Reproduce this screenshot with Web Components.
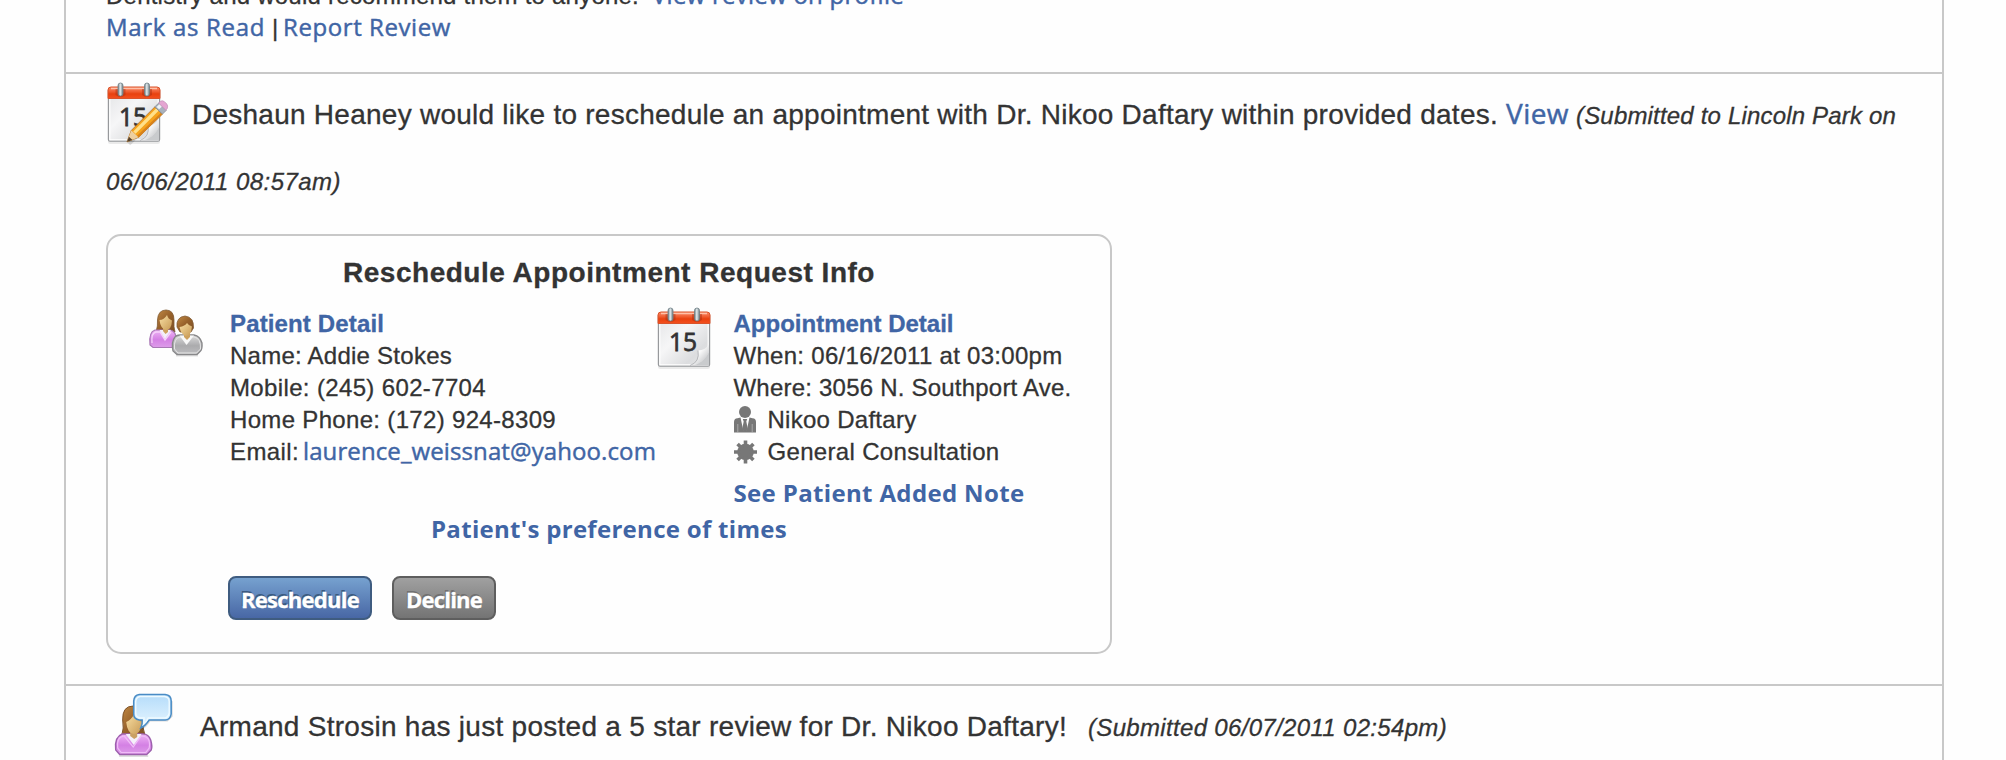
<!DOCTYPE html>
<html lang="en">
<head>
<meta charset="utf-8">
<title>Appointment activity</title>
<style>
html,body{margin:0;height:100%;background:#fefefe;overflow:hidden}
body{font-family:"Liberation Sans",Arial,sans-serif;color:#333}
</style>
</head>
<body>
<activity-feed>
  <feed-item class="first">
    <line-row><text-run w="533">Dentistry and would recommend them to anyone.</text-run><text-run kind="link" w="252" gap="13">View review on profile</text-run></line-row>
    <line-row><text-run kind="link" w="159">Mark as Read</text-run><text-run w="6" gap="7">|</text-run><text-run kind="link" w="168" gap="5">Report Review</text-run></line-row>
  </feed-item>
  <feed-item class="request">
    <line-row class="head"><calendar-icon edit></calendar-icon><text-run size="28" w="1306" gap="22" lead="68">Deshaun Heaney would like to reschedule an appointment with Dr. Nikoo Daftary within provided dates.</text-run><text-run kind="link" size="28" w="63" gap="8">View</text-run><text-run kind="note" w="320" gap="7">(Submitted to Lincoln Park on</text-run></line-row>
    <line-row class="head second"><text-run kind="note" w="235" lead="66">06/06/2011 08:57am)</text-run></line-row>
    <request-card></request-card>
  </feed-item>
  <feed-item class="review">
    <line-row class="head"><reviewer-icon></reviewer-icon><text-run size="28" w="867" gap="22" lead="68">Armand Strosin has just posted a 5 star review for Dr. Nikoo Daftary!</text-run><text-run kind="note" w="359" gap="21">(Submitted 06/07/2011 02:54pm)</text-run></line-row>
  </feed-item>
</activity-feed>
<script>
function define(name, html, setup) {
  customElements.define(name, class extends HTMLElement {
    connectedCallback() {
      if (this.shadowRoot) return;
      this.attachShadow({mode: 'open'}).innerHTML = html;
      if (setup) setup(this, this.shadowRoot);
    }
  });
}

// A single-line run of text, tracked to an exact advance width.
define('text-run', `<style>
  :host{display:block;flex:none;white-space:pre;font-size:24px;line-height:32px;-webkit-text-stroke:.3px currentColor}
  :host([kind=link]),:host([kind=strong-link]){font-family:"Open Sans","Noto Sans",sans-serif;color:#4065a5;line-height:20px;cursor:pointer}
  :host([kind=link]){-webkit-text-stroke-width:.45px}
  :host([kind=strong-link]){font-weight:700;line-height:32px;-webkit-text-stroke-width:0}
  :host([kind=heading]){font-weight:700;color:#4065a5}
  :host([kind=title]){font-weight:700}
  :host([kind=note]){font-style:italic}
  span{display:inline-block}
</style><span><slot></slot></span>`, (el, root) => {
  const num = k => parseFloat(el.getAttribute(k)) || 0;
  if (num('size')) el.style.fontSize = num('size') + 'px';
  if (num('lead')) el.style.lineHeight = num('lead') + 'px';
  if (num('gap')) el.style.marginLeft = num('gap') + 'px';
  if (num('w')) {
    const natural = root.querySelector('span').getBoundingClientRect().width;
    el.style.letterSpacing = ((num('w') - natural) / el.textContent.length).toFixed(4) + 'px';
    el.style.width = num('w') + 'px';
  }
});

define('line-row', `<style>
  :host{display:flex;align-items:baseline;height:32px}
  :host(.head){height:66px}
  :host(.second){margin-top:2px}
  :host(.note){margin-top:9px}
  :host(.center){justify-content:center}
  ::slotted(calendar-icon),::slotted(reviewer-icon){align-self:flex-start;flex:none}
</style><slot></slot>`);

define('activity-feed', `<style>
  :host{display:block;box-sizing:border-box;width:1880px;height:760px;margin-left:64px;border:solid #c8c8c8;border-width:0 2px;overflow:hidden}
</style><slot></slot>`);

define('feed-item', `<style>
  :host{display:block;padding:7px 40px 30px;border-bottom:2px solid #c8c8c8}
  :host(.first){margin-top:-20px;padding:0 40px 28px}
  :host(.review){padding-left:46px;border:0}
</style><slot></slot>`);

define('calendar-icon', `<style>
  :host{display:block;width:64px;height:66px}
  svg{display:block;overflow:visible}
  text{font:25px "Open Sans",sans-serif;fill:#333;stroke:#333;stroke-width:.8px}
  .pencil{display:none}
  :host([edit]) .pencil{display:block}
</style>
<svg width="64" height="66" viewBox="0 0 64 66">
  <defs>
    <linearGradient id="r" x2="0" y2="1"><stop offset="0" stop-color="#f98a66"/><stop offset=".35" stop-color="#f2643a"/><stop offset=".6" stop-color="#e8410f"/><stop offset="1" stop-color="#f4501e"/></linearGradient>
    <linearGradient id="p" x2="1" y2="1"><stop offset="0" stop-color="#e2e3e5"/><stop offset=".4" stop-color="#f6f6f7"/><stop offset=".75" stop-color="#dcdddf"/><stop offset="1" stop-color="#e8e8e8"/></linearGradient>
    <linearGradient id="m"><stop offset="0" stop-color="#6b7a82"/><stop offset=".45" stop-color="#e4ecee"/><stop offset="1" stop-color="#6b7a82"/></linearGradient>
    <linearGradient id="c" x1="0" y1="0" x2="1" y2="1"><stop offset="0" stop-color="#b0b2b5"/><stop offset=".4" stop-color="#fff"/><stop offset="1" stop-color="#b0b2b5"/></linearGradient>
  </defs>
  <rect x="2" y="59" width="52" height="4" rx="2" fill="#000" opacity=".08"/>
  <rect x="2.500" y="8" width="51" height="52" rx="1.500" fill="url(#p)" stroke="#97999c" stroke-width="1.400"/>
  <path d="M3.800 18V58.800H52.200V18" fill="none" stroke="#fff" stroke-width="1.200"/>
  <path d="M2 17.500V9Q2 6 5 6H51Q54 6 54 9V17.500Z" fill="url(#r)" stroke="#d9532b" stroke-width="1"/>
  <path d="M5 7.500H51" stroke="#ffc0a8" stroke-width="1.400"/>
  <path d="M9.500 8h10v6q-5 4-10 0zM36 8h10v6q-5 4-10 0z" fill="#a62f12" opacity=".45"/>
  <rect x="12" y="2" width="5" height="13" rx="2.500" fill="url(#m)" stroke="#6f8087" stroke-width=".8"/>
  <rect x="38.500" y="2" width="5" height="13" rx="2.500" fill="url(#m)" stroke="#6f8087" stroke-width=".8"/>
  <text x="13" y="45" textLength="28" lengthAdjust="spacingAndGlyphs">15</text>
  <path d="M53 38Q50 44 42 44.500Q44 56 34 59.500Q48 58 53 46Z" fill="url(#c)"/>
  <path d="M53 46Q48 57 37 59.300H53Z" fill="#c9cbcd"/>
  <path d="M42 44.500Q44 56 34 59.500" fill="none" stroke="#a9abae" stroke-width=".8"/>
  <g class="pencil" transform="translate(.8 2.400) scale(.96)">
    <path d="M23 63L60 27" stroke="#000" stroke-width="4" opacity=".12"/>
    <path d="M21 61L25.500 49L50 24.500L58 32L33 56Z" fill="#f5a21c" stroke="#b3742c" stroke-width=".9"/>
    <path d="M27.500 50L51.500 26L54 28.500L30 52.500Z" fill="#ffe08a"/>
    <path d="M31 55L56.500 30.500L58 32L33 56.500Z" fill="#d8821a"/>
    <path d="M21 61L25.500 49L33 56Z" fill="#edcfa0"/>
    <path d="M21 61L23 55.500L26.800 59Z" fill="#55422e"/>
    <path d="M50 24.500L54 20.500L62 28L58 32Z" fill="#a9b2bd" stroke="#828b94" stroke-width=".8"/>
    <path d="M51.800 24.500L55 21.500L57.500 24L54.500 27Z" fill="#eef2f5"/>
    <path d="M54 20.500L56 18.500Q58 17.500 60 19L62.500 21.500Q64 23.500 63 26L61.500 28Z" fill="#e5a5d2" stroke="#c492b8" stroke-width=".8"/>
  </g>
</svg>`);

const peopleDefs = `<defs>
  <linearGradient id="hair" x2="1" y2="1"><stop offset="0" stop-color="#c28a45"/><stop offset=".5" stop-color="#96602a"/><stop offset="1" stop-color="#7a4f26"/></linearGradient>
  <linearGradient id="skin" x2="1" y2="1"><stop offset="0" stop-color="#f8dfa4"/><stop offset="1" stop-color="#c89a55"/></linearGradient>
  <linearGradient id="vio" x2="0" y2="1"><stop offset="0" stop-color="#efb3f5"/><stop offset=".55" stop-color="#d480e4"/><stop offset="1" stop-color="#dd9ce9"/></linearGradient>
  <linearGradient id="gry" x2="0" y2="1"><stop offset="0" stop-color="#dcdcdc"/><stop offset=".55" stop-color="#ababad"/><stop offset="1" stop-color="#bdbdc0"/></linearGradient>
  <linearGradient id="bub" x2="0" y2="1"><stop offset="0" stop-color="#b5dcfa"/><stop offset="1" stop-color="#e6f6ff"/></linearGradient>
</defs>`;

define('patients-icon', `<style>:host{display:block;width:60px;height:56px}svg{display:block;overflow:visible}</style>
<svg width="60" height="56" viewBox="0 0 60 56">${peopleDefs}
  <path d="M10 26Q12 20 11.500 14Q12 4 20 4Q28 4 28 14Q27.500 21 29 26Z" fill="url(#hair)" stroke="#805a34" stroke-width=".8"/>
  <path d="M9 24H24Q30 25 30.500 34Q31 38 29 39L27 41.500H7L4 39Q2.500 26 9 24Z" fill="url(#vio)" stroke="#a878b4" stroke-width="1.200"/>
  <path d="M6 37Q5 27 10 26H14L19 34L25 26" fill="none" stroke="#f6d2fa" stroke-width="1.300"/>
  <path d="M13.500 24L19 33L25 24Z" fill="#f3eff8"/>
  <path d="M17 21h5v5l-2.500 2L17 25Z" fill="#cda15e"/>
  <path d="M13.500 14Q18 14 21 9Q22 13 26 14.500Q25.500 24 20 24Q14.500 23 13.500 14Z" fill="url(#skin)"/>
  <path d="M30 49.500H52" stroke="#000" stroke-width="2" opacity=".1"/>
  <path d="M29 31Q30 29.500 34 29H48Q54 30 56 37Q56.500 43 54.500 45L51 48.500H31L27 45Q25 36 29 31Z" fill="url(#gry)" stroke="#88888a" stroke-width="1.300"/>
  <path d="M28.500 43Q27.500 32 34 31H48Q55 32 54.500 43L50.500 47H32Z" fill="none" stroke="#e6e6e6" stroke-width="1"/>
  <path d="M33.500 29.500L40.500 39L48 29.500Z" fill="#f8f8f8"/>
  <path d="M31 21Q30 11 39 10Q48 11 47.500 22L45 26H34Z" fill="url(#hair)" stroke="#805a34" stroke-width=".8"/>
  <path d="M38 26h6v5l-3 3-3-3Z" fill="#cda15e"/>
  <path d="M33.500 21Q39 20 41 17Q43 20 46 20.500Q45 30 40 30Q35 29 33.500 21Z" fill="url(#skin)"/>
</svg>`);

define('reviewer-icon', `<style>:host{display:block;width:66px;height:66px}svg{display:block;overflow:visible}</style>
<svg width="66" height="66" viewBox=".8 3 66 66">${peopleDefs}
  <path d="M8 66H37" stroke="#000" stroke-width="2" opacity=".12"/>
  <path d="M10.500 46Q13 38 11.500 30Q11 16 22 16Q33 17 32 30Q31 38 34 46Z" fill="url(#hair)" stroke="#7d5127" stroke-width="1"/>
  <path d="M11 44H30Q37 43 39.500 50Q41.500 57 40 60L35.500 64.500H8.500L4.500 60Q3 47 11 44Z" fill="url(#vio)" stroke="#9d60ad" stroke-width="1.400"/>
  <path d="M6.500 58Q5 47 13 46L22 57L30 46Q40 46 38 58L34.500 62.500H10Z" fill="none" stroke="#f0bdf7" stroke-width="1.200"/>
  <path d="M14.500 44L22.500 55L30.500 44Z" fill="#f4eff9"/>
  <path d="M19 39h7v8l-3 2-4-3Z" fill="#caa063"/>
  <path d="M15 32Q20 30 23 24Q26 30 31 31Q30 44 22.500 44Q16 43 15 32Z" fill="url(#skin)"/>
  <path d="M28 5H55L60.500 10V25L55.500 30H38Q34.500 36 29.500 38Q31.500 34 31 30H28L22.500 25V10Z" transform="translate(1 1.500)" fill="#000" opacity=".14"/>
  <path d="M28 4.500H54Q60 5 60 11V24Q59 30 54 30H38Q34 36 29.500 38Q31.500 34 31 30H28Q22.500 29 22.500 24V11Q23 5 28 4.500Z" fill="url(#bub)" stroke="#4a8cc5" stroke-width="1.500"/>
  <path d="M29 6.500H53Q58 7 58 11.500V23Q57 28 53 28H37Q35 32 32.500 34L33 28H29Q24.500 27 24.500 23V11.500Q25 7 29 6.500Z" fill="none" stroke="#eefaff" stroke-width="1.400"/>
</svg>`);

define('doctor-icon', `<style>:host{display:block;width:35px;height:32px}svg{display:block}</style>
<svg width="24" height="32" viewBox="0 0 24 32" fill="#777">
  <circle cx="11" cy="8" r="6"/>
  <path d="M0 28.500V18Q0 14.500 3.500 14.300L6.500 13.500L9.300 26.500L11 17L12.700 26.500L15.500 13.500L18.500 14.300Q22 14.500 22 18V28.500Z"/>
  <path d="M8.800 15H13.200L12.300 17.500L13.800 25L11 28L8.200 25L9.700 17.500Z"/>
  <path d="M3.800 20V28M18.200 20V28" stroke="#a9a9a9" stroke-width="1"/>
</svg>`);

define('service-icon', `<style>:host{display:block;width:35px;height:32px}svg{display:block}</style>
<svg width="24" height="32" viewBox="0 0 24 32">
  <circle cx="11.500" cy="16" r="8.300" fill="#777"/>
  <g stroke="#777" stroke-width="3.600"><path d="M11.500 4.500V27.500M0 16H23M3.600 8.100L19.400 23.900M19.400 8.100L3.600 23.900"/></g>
</svg>`);

define('action-button', `<style>
  :host{display:block}
  button{display:flex;align-items:center;justify-content:center;box-sizing:border-box;width:144px;height:44px;padding:2px 0 0;border:2px solid #3f5c80;border-radius:8px;background:linear-gradient(#76a1cf,#4867a5);color:#fff;font:700 22px/30px "Open Sans",sans-serif;text-shadow:-1px -2px 0 #3a5a80}
  :host([tone=muted]) button{width:104px;border-color:#5e5e5e;background:linear-gradient(#a0a0a0,#747474);text-shadow:-1px -2px 0 #707070}
</style><button><slot></slot></button>`);

define('request-card', `<style>
  :host{display:block;box-sizing:border-box;width:1006px;height:420px;margin-top:19px;padding-top:21px;border:2px solid #c8c8c8;border-radius:15px}
  .cols{display:grid;grid-template-columns:84px 426px 77.500px 1fr;margin:19px 0 4px;padding-left:38px}
  .cols calendar-icon,.cols patients-icon{margin-top:-2px}
  .icon{display:flex}
  .actions{display:flex;gap:20px;margin-top:31px;padding-left:120px}
</style>
<line-row class="center"><text-run kind="title" size="28" w="532">Reschedule Appointment Request Info</text-run></line-row>
<div class="cols">
  <patients-icon></patients-icon>
  <div>
    <text-run kind="heading" w="154">Patient Detail</text-run>
    <text-run w="222">Name: Addie Stokes</text-run>
    <text-run w="256">Mobile: (245) 602-7704</text-run>
    <text-run w="326">Home Phone: (172) 924-8309</text-run>
    <line-row><text-run w="69">Email:</text-run><text-run kind="link" w="353" gap="4">laurence_weissnat@yahoo.com</text-run></line-row>
  </div>
  <calendar-icon></calendar-icon>
  <div>
    <text-run kind="heading" w="220">Appointment Detail</text-run>
    <text-run w="329">When: 06/16/2011 at 03:00pm</text-run>
    <text-run w="338">Where: 3056 N. Southport Ave.</text-run>
    <div class="icon"><doctor-icon></doctor-icon><text-run w="149" gap="-1">Nikoo Daftary</text-run></div>
    <div class="icon"><service-icon></service-icon><text-run w="232" gap="-1">General Consultation</text-run></div>
    <line-row class="note"><text-run kind="strong-link" w="291">See Patient Added Note</text-run></line-row>
  </div>
</div>
<line-row class="center"><text-run kind="strong-link" w="356">Patient's preference of times</text-run></line-row>
<div class="actions">
  <action-button><text-run size="22" lead="30" w="118">Reschedule</text-run></action-button>
  <action-button tone="muted"><text-run size="22" lead="30" w="76">Decline</text-run></action-button>
</div>`);
</script>
</body>
</html>
